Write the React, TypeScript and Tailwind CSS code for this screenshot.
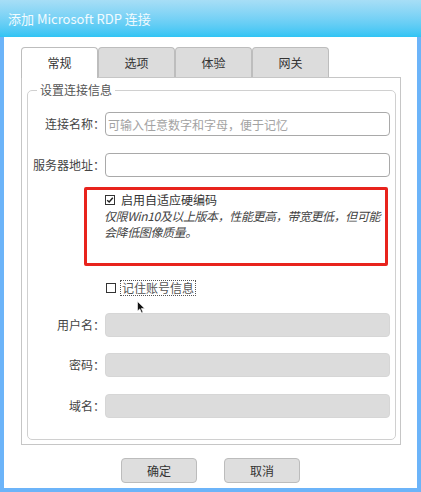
const font = "font-['Noto_Sans_CJK_SC','Noto_Sans',sans-serif]";

function Field({ label, placeholder, disabled }: { label: string; placeholder?: string; disabled?: boolean }) {
  return (
    <div className="flex items-center h-[24px]">
      <label className="w-[77px] text-right text-[12px] leading-[16px] text-[#444] whitespace-nowrap">{label}</label>
      <input
        disabled={disabled}
        placeholder={placeholder}
        className={
          disabled
            ? 'w-[285px] h-[24px] rounded-[4px] border border-[#d6d6d6] bg-[#dcdcdc] outline-none'
            : 'w-[285px] h-[24px] rounded-[4px] border border-[#a9a9a9] bg-white px-[2px] text-[12px] outline-none placeholder:text-[#a3a3a3]'
        }
      />
    </div>
  );
}

function CheckBox({ checked }: { checked?: boolean }) {
  return (
    <span className="w-[10px] h-[10px] border-[1.5px] border-[#333] bg-white flex items-center justify-center shrink-0">
      {checked && (
        <svg width="8" height="8" viewBox="0 0 8 8">
          <path d="M1.2 4.2 L3.2 6 L6.8 1.8" fill="none" stroke="#222" strokeWidth="1.5" />
        </svg>
      )}
    </span>
  );
}

export default function App() {
  const tabs = ['常规', '选项', '体验', '网关'];

  return (
    <div className={`w-[421px] h-[492px] flex flex-col bg-[#6cb4f9] ${font}`}>
      {/* title bar */}
      <div className="h-[37px] shrink-0 flex items-center pl-[8px] bg-gradient-to-b from-[#a7def6] to-[#2ec4f4] text-[13px] text-white/90">
        添加 Microsoft RDP 连接
      </div>

      <div className="flex-1 mx-[4px] mb-[4px] bg-white flex flex-col pl-[17px] pt-[10px]">
        <div className="flex h-[30px] items-end">
          {tabs.map((t, i) => (
            <div
              key={t}
              className={
                i === 0
                  ? 'relative z-10 -mb-px w-[77px] h-[31px] flex items-center justify-center rounded-t-[4px] border border-b-0 border-[#bdbdbd] bg-white text-[12px] text-[#333]'
                  : 'w-[77px] h-[30px] flex items-center justify-center rounded-t-[4px] border border-b-0 border-[#bdbdbd] bg-[#dcdcdc] text-[12px] text-[#333]'
              }
            >
              {t}
            </div>
          ))}
        </div>

        <div className="w-[380px] h-[368px] border border-[#c6c6c6] flex flex-col pt-[4px] pl-[5px] pr-[4px] pb-[4px]">
          <fieldset className="flex-1 rounded-[5px] border border-[#d0d0d0]">
            <legend className="ml-[9px] px-[3px] text-[12px] leading-[16px] text-[#555]">设置连接信息</legend>

            <div className="flex flex-col pt-[14px]">
              <Field label="连接名称：" placeholder="可输入任意数字和字母，便于记忆" />
              <div className="mt-[17px]">
                <Field label="服务器地址：" />
              </div>

              <div className="mt-[10px] ml-[56px] w-[304px] h-[79px] border-[3px] border-[#e8231d] rounded-[2px] pt-[2px] pl-[18px] text-[12px] leading-[16px] text-[#333]">
                <div className="flex items-center gap-[6px]">
                  <CheckBox checked />
                  <span>启用自适应硬编码</span>
                </div>
                <div className="italic text-[#444] -ml-[1px] whitespace-nowrap tracking-[-0.4px]">
                  仅限Win10及以上版本，性能更高，带宽更低，但可能
                  <br />
                  会降低图像质量。
                </div>
              </div>

              <div className="relative mt-[14px] ml-[78px] flex items-center gap-[4px] h-[16px]">
                <CheckBox />
                <span className="border border-dotted border-[#555] px-[1px] text-[12px] leading-[14px] text-[#555]">记住账号信息</span>
                <svg className="absolute left-[31px] top-[21px]" width="9" height="13" viewBox="0 0 9 13">
                  <path d="M0.5 0.5 L0.5 10 L2.8 7.9 L4.6 12 L6 11.3 L4.3 7.4 L7.6 7.4 Z" fill="#111" stroke="#fff" strokeWidth="0.6" />
                </svg>
              </div>

              <div className="mt-[17px]">
                <Field label="用户名：" disabled />
              </div>
              <div className="mt-[16px]">
                <Field label="密码：" disabled />
              </div>
              <div className="mt-[17px]">
                <Field label="域名：" disabled />
              </div>
            </div>
          </fieldset>
        </div>

        <div className="flex justify-center gap-[27px] mt-[13px] -ml-[17px]">
          <button className="w-[76px] h-[25px] rounded-[4px] border border-[#bcbcbc] bg-[#dedede] text-[12px] text-[#333]">确定</button>
          <button className="w-[76px] h-[25px] rounded-[4px] border border-[#bcbcbc] bg-[#dedede] text-[12px] text-[#333]">取消</button>
        </div>
      </div>
    </div>
  );
}
